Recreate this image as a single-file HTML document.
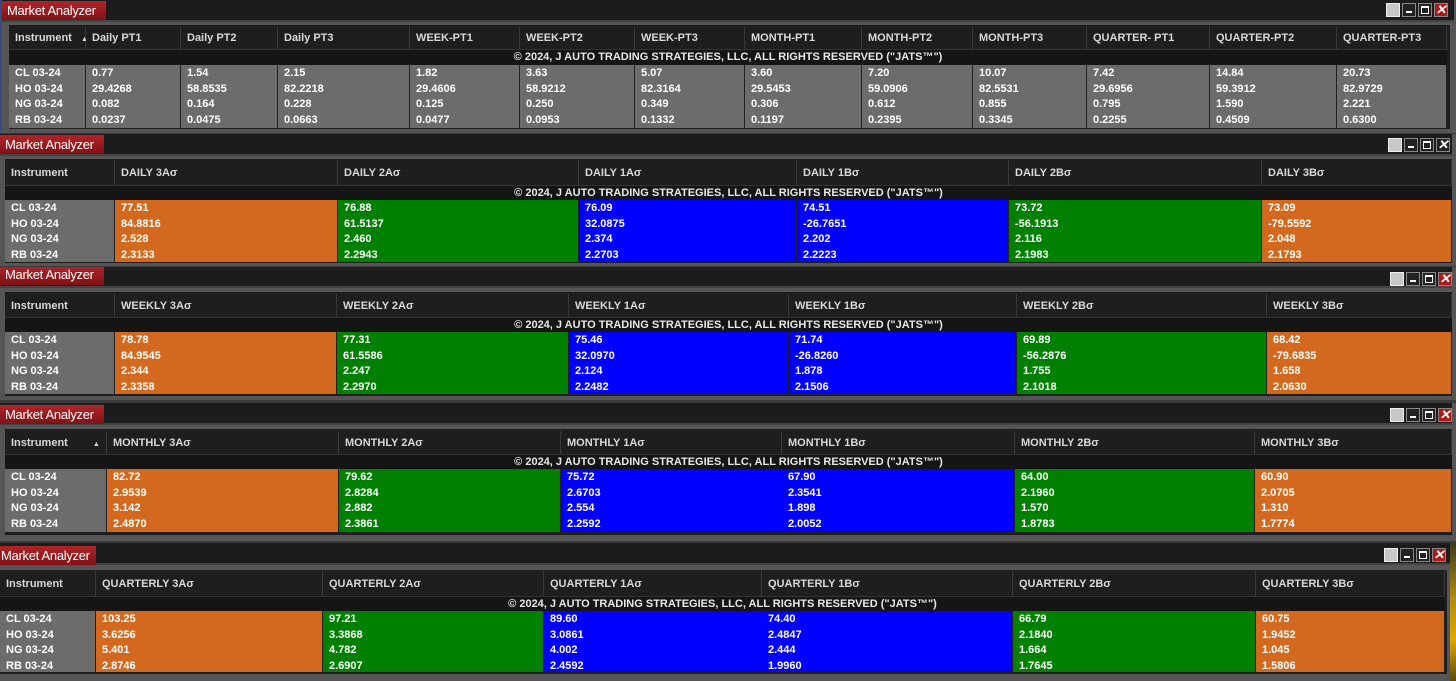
<!DOCTYPE html>
<html><head><meta charset="utf-8"><style>
*{margin:0;padding:0;box-sizing:border-box}
body{width:1456px;height:681px;overflow:hidden;background:#3a3a3a;font-family:"Liberation Sans",Arial,sans-serif;font-weight:bold;font-size:11px;position:relative}
.p{position:absolute;left:0;width:1456px;background:#555;overflow:hidden}
.tb{position:absolute;left:0;top:0;width:1452px;height:22px;background:#1c1c1c;border-bottom:2px solid #444}
.t{position:absolute;left:0;top:1px;height:19px;background:linear-gradient(#b02428,#7e1216);color:#fff;font-weight:normal;font-size:13px;line-height:19px;padding-left:5px;width:104px;letter-spacing:-0.3px;white-space:nowrap;overflow:hidden}
.h{position:absolute;background:#1e1e1e;color:#d8d8d8;border-right:1px solid #3a3a3a;border-bottom:1px solid #333;padding-left:6px;white-space:nowrap}
.cp{position:absolute;background:#151515;color:#e8e8e8;text-align:center;line-height:15px;height:15px}
.d{position:absolute;color:#fff;padding-left:6px;line-height:15.5px;padding-top:1px;border-right:1px solid #222;white-space:nowrap}
.g{background:#6c6c6c}.o{background:#d2691e}.gr{background:#008000}.b{background:#0000ff}
.btns{position:absolute;top:3px;right:10px;display:flex;gap:2px}
.btns i{display:block;width:14px;height:14px;border:1px solid #888;background:#222;position:relative}
.btns i.s{background:#c8c8c8;border-color:#eee}
.btns i.m:after{content:"";position:absolute;left:3px;right:3px;bottom:3px;height:2px;background:#fff}
.btns i.x{background:#b01818;color:#fff;font-size:13px;line-height:12px;text-align:center}
.btns i.x.n{background:#222}
.btns i.mx:after{content:"";position:absolute;left:2px;right:2px;top:2px;bottom:2px;border:1px solid #fff;border-top-width:2px}
</style></head><body>

<!-- Panel 1 -->
<div class="p" style="top:0;height:133px;border-left:2px solid #3a4a7a">
<div class="tb"></div><div class="t">Market Analyzer</div>
<div class="btns" style="right:8px"><i class="s"></i><i class="m"></i><i class="mx"></i><i class="x">✕</i></div>
<div style="position:absolute;left:7px;top:25px;width:1441px;height:104px;background:#1e1e1e"></div>
<div class="h" style="left:7px;top:27px;width:77px;height:23px;line-height:23px">Instrument &nbsp;&nbsp;<span style="font-size:7px">▲</span></div>
<div class="h" style="left:84px;top:27px;width:95px;height:23px;line-height:23px">Daily PT1</div>
<div class="h" style="left:179px;top:27px;width:97px;height:23px;line-height:23px">Daily PT2</div>
<div class="h" style="left:276px;top:27px;width:132px;height:23px;line-height:23px">Daily PT3</div>
<div class="h" style="left:408px;top:27px;width:110px;height:23px;line-height:23px">WEEK-PT1</div>
<div class="h" style="left:518px;top:27px;width:115px;height:23px;line-height:23px">WEEK-PT2</div>
<div class="h" style="left:633px;top:27px;width:110px;height:23px;line-height:23px">WEEK-PT3</div>
<div class="h" style="left:743px;top:27px;width:117px;height:23px;line-height:23px">MONTH-PT1</div>
<div class="h" style="left:860px;top:27px;width:111px;height:23px;line-height:23px">MONTH-PT2</div>
<div class="h" style="left:971px;top:27px;width:114px;height:23px;line-height:23px">MONTH-PT3</div>
<div class="h" style="left:1085px;top:27px;width:123px;height:23px;line-height:23px">QUARTER- PT1</div>
<div class="h" style="left:1208px;top:27px;width:127px;height:23px;line-height:23px">QUARTER-PT2</div>
<div class="h" style="left:1335px;top:27px;width:110px;height:23px;line-height:23px">QUARTER-PT3</div>
<div class="cp" style="left:7px;top:50px;width:1438px">© 2024, J AUTO TRADING STRATEGIES, LLC, ALL RIGHTS RESERVED ("JATS™")</div>
<div class="d g" style="left:7px;top:65px;width:77px;height:63px">CL 03-24<br>HO 03-24<br>NG 03-24<br>RB 03-24</div>
<div class="d g" style="left:84px;top:65px;width:95px;height:63px">0.77<br>29.4268<br>0.082<br>0.0237</div>
<div class="d g" style="left:179px;top:65px;width:97px;height:63px">1.54<br>58.8535<br>0.164<br>0.0475</div>
<div class="d g" style="left:276px;top:65px;width:132px;height:63px">2.15<br>82.2218<br>0.228<br>0.0663</div>
<div class="d g" style="left:408px;top:65px;width:110px;height:63px">1.82<br>29.4606<br>0.125<br>0.0477</div>
<div class="d g" style="left:518px;top:65px;width:115px;height:63px">3.63<br>58.9212<br>0.250<br>0.0953</div>
<div class="d g" style="left:633px;top:65px;width:110px;height:63px">5.07<br>82.3164<br>0.349<br>0.1332</div>
<div class="d g" style="left:743px;top:65px;width:117px;height:63px">3.60<br>29.5453<br>0.306<br>0.1197</div>
<div class="d g" style="left:860px;top:65px;width:111px;height:63px">7.20<br>59.0906<br>0.612<br>0.2395</div>
<div class="d g" style="left:971px;top:65px;width:114px;height:63px">10.07<br>82.5531<br>0.855<br>0.3345</div>
<div class="d g" style="left:1085px;top:65px;width:123px;height:63px">7.42<br>29.6956<br>0.795<br>0.2255</div>
<div class="d g" style="left:1208px;top:65px;width:127px;height:63px">14.84<br>59.3912<br>1.590<br>0.4509</div>
<div class="d g" style="left:1335px;top:65px;width:110px;height:63px">20.73<br>82.9729<br>2.221<br>0.6300</div>
</div>

<!-- Panel 2 -->
<div class="p" style="top:134px;height:132px">
<div class="tb"></div><div class="t">Market Analyzer</div>
<div class="btns" style="right:6px;top:4px"><i class="s"></i><i class="m"></i><i class="mx"></i><i class="x n">✕</i></div>
<div style="position:absolute;left:5px;top:25px;width:1447px;height:104px;background:#1e1e1e"></div>
<div class="h" style="left:5px;top:26px;width:110px;height:26px;line-height:26px">Instrument</div>
<div class="h" style="left:115px;top:26px;width:223px;height:26px;line-height:26px">DAILY 3Aσ</div>
<div class="h" style="left:338px;top:26px;width:241px;height:26px;line-height:26px">DAILY 2Aσ</div>
<div class="h" style="left:579px;top:26px;width:218px;height:26px;line-height:26px">DAILY 1Aσ</div>
<div class="h" style="left:797px;top:26px;width:212px;height:26px;line-height:26px">DAILY 1Bσ</div>
<div class="h" style="left:1009px;top:26px;width:253px;height:26px;line-height:26px">DAILY 2Bσ</div>
<div class="h" style="left:1262px;top:26px;width:190px;height:26px;line-height:26px">DAILY 3Bσ</div>
<div class="cp" style="left:5px;top:52px;width:1447px;height:14px;line-height:14px">© 2024, J AUTO TRADING STRATEGIES, LLC, ALL RIGHTS RESERVED ("JATS™")</div>
<div class="d g" style="left:5px;top:66px;width:110px;height:62px">CL 03-24<br>HO 03-24<br>NG 03-24<br>RB 03-24</div>
<div class="d o" style="left:115px;top:66px;width:223px;height:62px">77.51<br>84.8816<br>2.528<br>2.3133</div>
<div class="d gr" style="left:338px;top:66px;width:241px;height:62px">76.88<br>61.5137<br>2.460<br>2.2943</div>
<div class="d b" style="left:579px;top:66px;width:218px;height:62px">76.09<br>32.0875<br>2.374<br>2.2703</div>
<div class="d b" style="left:797px;top:66px;width:212px;height:62px">74.51<br>-26.7651<br>2.202<br>2.2223</div>
<div class="d gr" style="left:1009px;top:66px;width:253px;height:62px">73.72<br>-56.1913<br>2.116<br>2.1983</div>
<div class="d o" style="left:1262px;top:66px;width:190px;height:62px">73.09<br>-79.5592<br>2.048<br>2.1793</div>
</div>

<!-- Panel 3 -->
<div class="p" style="top:267px;height:133px">
<div class="tb" style="height:21px"></div><div class="t" style="top:0;height:18px;line-height:16px">Market Analyzer</div>
<div class="btns" style="right:4px;top:5px"><i class="s"></i><i class="m"></i><i class="mx"></i><i class="x">✕</i></div>
<div style="position:absolute;left:5px;top:25px;width:1447px;height:104px;background:#1e1e1e"></div>
<div class="h" style="left:5px;top:27px;width:110px;height:24px;line-height:24px">Instrument</div>
<div class="h" style="left:115px;top:27px;width:222px;height:24px;line-height:24px">WEEKLY 3Aσ</div>
<div class="h" style="left:337px;top:27px;width:232px;height:24px;line-height:24px">WEEKLY 2Aσ</div>
<div class="h" style="left:569px;top:27px;width:220px;height:24px;line-height:24px">WEEKLY 1Aσ</div>
<div class="h" style="left:789px;top:27px;width:228px;height:24px;line-height:24px">WEEKLY 1Bσ</div>
<div class="h" style="left:1017px;top:27px;width:250px;height:24px;line-height:24px">WEEKLY 2Bσ</div>
<div class="h" style="left:1267px;top:27px;width:185px;height:24px;line-height:24px">WEEKLY 3Bσ</div>
<div class="cp" style="left:5px;top:51px;width:1447px;height:14px;line-height:14px">© 2024, J AUTO TRADING STRATEGIES, LLC, ALL RIGHTS RESERVED ("JATS™")</div>
<div class="d g" style="left:5px;top:65px;width:110px;height:62px">CL 03-24<br>HO 03-24<br>NG 03-24<br>RB 03-24</div>
<div class="d o" style="left:115px;top:65px;width:222px;height:62px">78.78<br>84.9545<br>2.344<br>2.3358</div>
<div class="d gr" style="left:337px;top:65px;width:232px;height:62px">77.31<br>61.5586<br>2.247<br>2.2970</div>
<div class="d b" style="left:569px;top:65px;width:220px;height:62px">75.46<br>32.0970<br>2.124<br>2.2482</div>
<div class="d b" style="left:789px;top:65px;width:228px;height:62px">71.74<br>-26.8260<br>1.878<br>2.1506</div>
<div class="d gr" style="left:1017px;top:65px;width:250px;height:62px">69.89<br>-56.2876<br>1.755<br>2.1018</div>
<div class="d o" style="left:1267px;top:65px;width:185px;height:62px">68.42<br>-79.6835<br>1.658<br>2.0630</div>
</div>

<!-- Panel 4 -->
<div class="p" style="top:403px;height:138px">
<div class="tb"></div><div class="t" style="top:2px">Market Analyzer</div>
<div class="btns" style="right:4px;top:5px"><i class="s"></i><i class="m"></i><i class="mx"></i><i class="x">✕</i></div>
<div style="position:absolute;left:5px;top:26px;width:1447px;height:106px;background:#1e1e1e"></div>
<div class="h" style="left:5px;top:28px;width:102px;height:24px;line-height:24px">Instrument <span style="font-size:7px;margin-left:22px">▲</span></div>
<div class="h" style="left:107px;top:28px;width:232px;height:24px;line-height:24px">MONTHLY 3Aσ</div>
<div class="h" style="left:339px;top:28px;width:222px;height:24px;line-height:24px">MONTHLY 2Aσ</div>
<div class="h" style="left:561px;top:28px;width:221px;height:24px;line-height:24px">MONTHLY 1Aσ</div>
<div class="h" style="left:782px;top:28px;width:233px;height:24px;line-height:24px">MONTHLY 1Bσ</div>
<div class="h" style="left:1015px;top:28px;width:240px;height:24px;line-height:24px">MONTHLY 2Bσ</div>
<div class="h" style="left:1255px;top:28px;width:197px;height:24px;line-height:24px">MONTHLY 3Bσ</div>
<div class="cp" style="left:5px;top:52px;width:1447px;height:14px;line-height:14px">© 2024, J AUTO TRADING STRATEGIES, LLC, ALL RIGHTS RESERVED ("JATS™")</div>
<div class="d g" style="left:5px;top:66px;width:102px;height:63px">CL 03-24<br>HO 03-24<br>NG 03-24<br>RB 03-24</div>
<div class="d o" style="left:107px;top:66px;width:232px;height:63px">82.72<br>2.9539<br>3.142<br>2.4870</div>
<div class="d gr" style="left:339px;top:66px;width:222px;height:63px">79.62<br>2.8284<br>2.882<br>2.3861</div>
<div class="d b" style="left:561px;top:66px;width:221px;height:63px">75.72<br>2.6703<br>2.554<br>2.2592</div>
<div class="d b" style="left:782px;top:66px;width:233px;height:63px">67.90<br>2.3541<br>1.898<br>2.0052</div>
<div class="d gr" style="left:1015px;top:66px;width:240px;height:63px">64.00<br>2.1960<br>1.570<br>1.8783</div>
<div class="d o" style="left:1255px;top:66px;width:197px;height:63px">60.90<br>2.0705<br>1.310<br>1.7774</div>
</div>

<!-- Panel 5 -->
<div class="p" style="top:543px;height:138px">
<div class="tb" style="width:1450px"></div><div class="t" style="top:3px;width:96px;padding-left:1px">Market Analyzer</div>
<div class="btns" style="right:10px;top:5px"><i class="s"></i><i class="m"></i><i class="mx"></i><i class="x">✕</i></div>
<div style="position:absolute;left:1450px;top:0;width:6px;height:138px;background:linear-gradient(#3a3a20,#b08a10 40%,#e0a800 70%,#5a4a10)"></div>
<div style="position:absolute;left:0;top:27px;width:1447px;height:104px;background:#1e1e1e"></div>
<div class="h" style="left:0;top:28px;width:96px;height:26px;line-height:26px">Instrument</div>
<div class="h" style="left:96px;top:28px;width:227px;height:26px;line-height:26px">QUARTERLY 3Aσ</div>
<div class="h" style="left:323px;top:28px;width:221px;height:26px;line-height:26px">QUARTERLY 2Aσ</div>
<div class="h" style="left:544px;top:28px;width:218px;height:26px;line-height:26px">QUARTERLY 1Aσ</div>
<div class="h" style="left:762px;top:28px;width:251px;height:26px;line-height:26px">QUARTERLY 1Bσ</div>
<div class="h" style="left:1013px;top:28px;width:243px;height:26px;line-height:26px">QUARTERLY 2Bσ</div>
<div class="h" style="left:1256px;top:28px;width:189px;height:26px;line-height:26px">QUARTERLY 3Bσ</div>
<div class="cp" style="left:0;top:54px;width:1445px;height:14px;line-height:14px">© 2024, J AUTO TRADING STRATEGIES, LLC, ALL RIGHTS RESERVED ("JATS™")</div>
<div class="d g" style="left:0;top:68px;width:96px;height:61px">CL 03-24<br>HO 03-24<br>NG 03-24<br>RB 03-24</div>
<div class="d o" style="left:96px;top:68px;width:227px;height:61px">103.25<br>3.6256<br>5.401<br>2.8746</div>
<div class="d gr" style="left:323px;top:68px;width:221px;height:61px">97.21<br>3.3868<br>4.782<br>2.6907</div>
<div class="d b" style="left:544px;top:68px;width:218px;height:61px">89.60<br>3.0861<br>4.002<br>2.4592</div>
<div class="d b" style="left:762px;top:68px;width:251px;height:61px">74.40<br>2.4847<br>2.444<br>1.9960</div>
<div class="d gr" style="left:1013px;top:68px;width:243px;height:61px">66.79<br>2.1840<br>1.664<br>1.7645</div>
<div class="d o" style="left:1256px;top:68px;width:189px;height:61px">60.75<br>1.9452<br>1.045<br>1.5806</div>
</div>
</body></html>
